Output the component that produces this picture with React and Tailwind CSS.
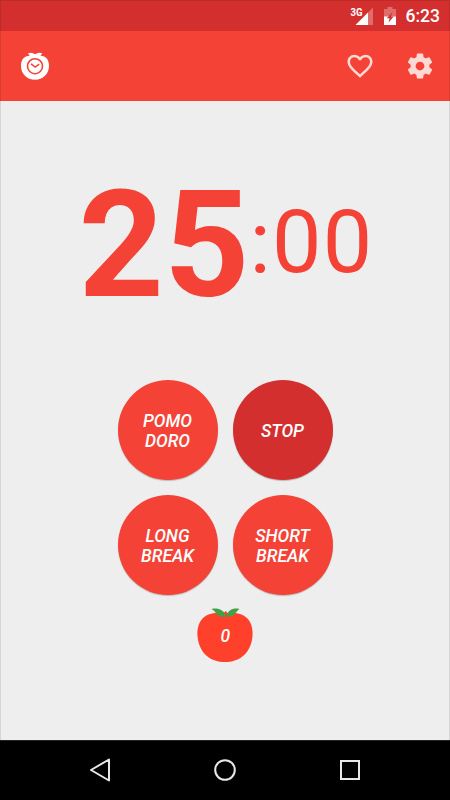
const CircleButton = ({ lines, className }) => (
  <button
    className={`flex size-[100px] flex-col items-center justify-center rounded-full pt-[2px] text-[17.500px] leading-[20px] font-medium italic text-white shadow-[0_1px_1px_rgba(0,0,0,0.22)] ${className}`}
  >
    {lines.map((line) => (
      <span key={line}>{line}</span>
    ))}
  </button>
);

const StatusBar = () => (
  <div className="flex h-[31px] shrink-0 items-center justify-end bg-[#d32f2f] pr-[10px] text-white">
    <svg className="mr-[10px] h-[20px] w-[24px]" viewBox="0 0 24 20">
      <path d="M23 1.500V19H5.500Z" fill="#fff" fillOpacity=".3" />
      <path d="M18 6.500V19H5.500Z" fill="#fff" />
      <text x="0.5" y="9.500" fontSize="10.500" fontWeight="700" fontFamily="Roboto" fill="#fff" textLength="12" lengthAdjust="spacingAndGlyphs">3G</text>
    </svg>
    <svg className="mr-[10px] h-[20px] w-[12px]" viewBox="0 0 12 20">
      <path d="M0 3h3.500V1h5v2H12v8H0Z" fill="#fff" fillOpacity=".3" />
      <path d="M0 10.500h12V19H0Z" fill="#fff" />
      <path d="M8.500 6 2.800 12.200h2.800l-1 4.300L9.700 10.400H7Z" fill="#d32f2f" />
    </svg>
    <span className="text-[17.500px] leading-[20px] font-medium">6:23</span>
  </div>
);

const Toolbar = () => (
  <div className="flex h-[70px] shrink-0 items-center bg-[#f44336] pr-[15px] pl-[20px]">
    <svg className="mr-auto size-[30px]" viewBox="0 0 30 30">
      <path
        d="M8 2.200Q12 .8 15 3.300Q18 .8 22.200 2.200L20.500 4.800C26 4.800 29 9 29 14.800C29 23 23 28.700 15 28.700S1 23 1 14.800C1 9 4 4.800 9.700 4.800Z"
        fill="#fff"
      />
      <circle cx="15" cy="15.200" r="7.500" fill="none" stroke="#f44336" strokeWidth="1.600" />
      <path d="m11 12.800 4.200 3.300 4-3" fill="none" stroke="#f44336" strokeWidth="1.500" />
    </svg>
    <svg className="mr-[30px] size-[30px]" viewBox="0 0 24 24" fill="#fff" fillOpacity=".8">
      <path d="M16.500 3c-1.740 0-3.410.81-4.500 2.090C10.910 3.810 9.240 3 7.500 3 4.420 3 2 5.420 2 8.500c0 3.780 3.400 6.860 8.550 11.540L12 21.350l1.450-1.320C18.600 15.360 22 12.280 22 8.500 22 5.420 19.580 3 16.500 3zm-4.400 15.550l-.1.100-.1-.1C7.140 14.240 4 11.390 4 8.500 4 6.500 5.500 5 7.500 5c1.540 0 3.040.99 3.570 2.360h1.870C13.460 5.990 14.960 5 16.500 5c2 0 3.500 1.500 3.500 3.500 0 2.890-3.140 5.740-7.900 10.050z" />
    </svg>
    <svg className="size-[30px]" viewBox="0 0 24 24" fill="#fff" fillOpacity=".8">
      <path d="M19.430 12.980c.04-.32.07-.64.07-.98s-.03-.66-.07-.98l2.110-1.650c.19-.15.24-.42.12-.64l-2-3.460c-.12-.22-.39-.3-.61-.22l-2.490 1c-.52-.4-1.080-.73-1.690-.98l-.38-2.650C14.460 2.180 14.250 2 14 2h-4c-.25 0-.46.18-.49.42l-.38 2.650c-.61.25-1.170.59-1.690.98l-2.490-1c-.23-.09-.49 0-.61.22l-2 3.460c-.13.22-.07.49.12.64l2.110 1.650c-.04.32-.07.65-.07.98s.03.66.07.98l-2.110 1.650c-.19.15-.24.42-.12.64l2 3.460c.12.22.39.3.61.22l2.490-1c.52.4 1.080.73 1.690.98l.38 2.650c.03.24.24.42.49.42h4c.25 0 .46-.18.49-.42l.38-2.650c.61-.25 1.170-.59 1.690-.98l2.490 1c.23.09.49 0 .61-.22l2-3.460c.12-.22.07-.49-.12-.64l-2.110-1.650zM12 15.500c-1.930 0-3.500-1.570-3.500-3.500s1.570-3.500 3.500-3.500 3.500 1.570 3.500 3.500-1.570 3.500-3.500 3.500z" />
    </svg>
  </div>
);

const TomatoCounter = ({ count }) => (
  <svg className="mt-[12px] h-[56px] w-[58px]" viewBox="0 0 58 56">
    <path
      d="M29 7C36 5 46 5.500 51.500 11.500C55.500 16 57.500 23 56.300 31C54 47 43 55 29 55S4 47 1.700 31C.5 23 2.500 16 6.500 11.500C12 5.500 22 5 29 7Z"
      fill="#ff412c"
    />
    <path d="M25 8 30 4l3 4Z" fill="#ff412c" />
    <path d="M15.500 2C21 .5 28.500 2.500 30 9.500C24 10.500 21 8 19.500 5.500Q18 3 15.500 2Z" fill="#43a047" />
    <path d="M43.500 2C38 .5 31.500 2.500 30.500 9.500C36 10.500 38.500 8 40 5.500Q41.500 3 43.500 2Z" fill="#43a047" />
    <text x="29.300" y="34.700" textAnchor="middle" fontFamily="Roboto" fontSize="17.500" fontWeight="500" fontStyle="italic" fill="#fff">
      {count}
    </text>
  </svg>
);

const NavigationBar = () => (
  <div className="flex h-[60px] shrink-0 items-center justify-between border-t border-[#202420] bg-black px-[87px] pb-[2px]">
    <svg className="size-[26px]" viewBox="0 0 26 26" fill="none" stroke="#e8e8e8" strokeWidth="2" strokeLinejoin="round">
      <path d="M4 13 22 2.500V23.500Z" />
    </svg>
    <svg className="size-[26px]" viewBox="0 0 26 26" fill="none" stroke="#e8e8e8" strokeWidth="2">
      <circle cx="13" cy="13" r="9.800" />
    </svg>
    <svg className="size-[26px]" viewBox="0 0 26 26" fill="none" stroke="#e8e8e8" strokeWidth="2">
      <rect x="4" y="4" width="18" height="18" />
    </svg>
  </div>
);

export default function App() {
  return (
    <div className="relative flex h-[800px] w-[450px] flex-col overflow-hidden bg-[#eeeeee] font-['Roboto',sans-serif]">
      <StatusBar />
      <Toolbar />
      <main className="flex flex-1 flex-col items-center">
        <div className="mt-[70px] flex h-[149px] items-start pl-[2px] leading-none text-[#f44336]">
          <span className="text-[149px] font-bold">25</span>
          <span className="mt-[27px] text-[88px] tracking-[1.300px]">:00</span>
        </div>
        <div className="mt-[60px] grid grid-cols-2 gap-[15px]">
          <CircleButton lines={["POMO", "DORO"]} className="bg-[#f44336]" />
          <CircleButton lines={["STOP"]} className="bg-[#d32f2f]" />
          <CircleButton lines={["LONG", "BREAK"]} className="bg-[#f44336]" />
          <CircleButton lines={["SHORT", "BREAK"]} className="bg-[#f44336]" />
        </div>
        <TomatoCounter count={0} />
      </main>
      <NavigationBar />
      <div className="pointer-events-none absolute inset-0 border-x border-t border-black/10" />
    </div>
  );
}
